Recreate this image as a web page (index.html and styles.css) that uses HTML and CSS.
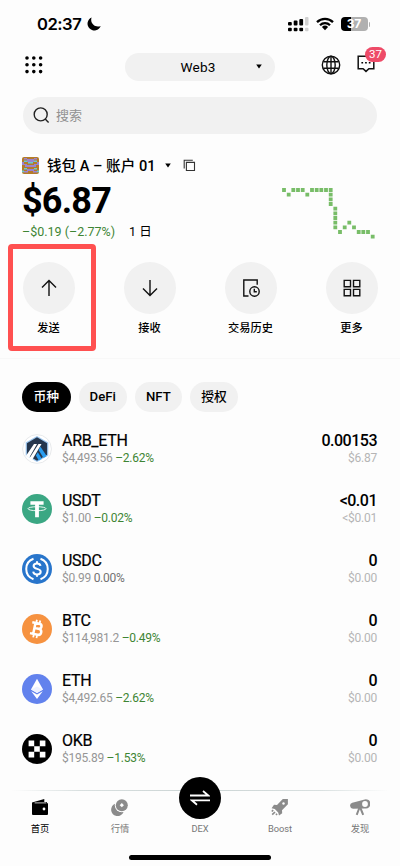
FILE: index.html
```html
<!DOCTYPE html>
<html lang="zh-CN">
<head>
<meta charset="utf-8">
<meta name="viewport" content="width=device-width, initial-scale=1">
<title>Web3</title>
<link rel="stylesheet" href="styles.css">
</head>
<body>
<div class="phone">
  <div class="status">
    <span class="clock">02:37</span>
    <svg class="moon" width="14" height="14" viewBox="0 0 14 14"><path d="M4.6.4A6.8 6.8 0 1 0 13.7 9C8.6 11.3 2.5 6.5 4.6.4Z"/></svg>
    <svg class="signal" width="21" height="15" viewBox="0 0 21 15"><g><rect x="0" y="5" width="3.8" height="3.6" rx="1"/><rect x="5.7" y="3.6" width="3.8" height="5" rx="1"/><rect x="11.3" y="2" width="3.8" height="6.6" rx="1"/><rect x="0" y="10.8" width="3.8" height="3.5" rx="1"/><rect x="5.7" y="10.8" width="3.8" height="3.5" rx="1"/><rect x="11.3" y="10.8" width="3.8" height="3.5" rx="1"/></g><g fill="#d0d0d0"><rect x="17" y="0" width="3.5" height="8.6" rx="1"/><rect x="17" y="10.8" width="3.5" height="3.5" rx="1"/></g></svg>
    <svg class="wifi" width="18" height="14" viewBox="0 0 18 14"><g fill="none" stroke="#000" stroke-width="2.3"><path d="M1 5.1a11.5 11.5 0 0 1 16 0"/><path d="M4 8.2a7.1 7.1 0 0 1 10 0"/></g><path d="M5.9 10a4.5 4.5 0 0 1 6.2 0L9 13.2Z"/></svg>
    <div class="battery"><span>37</span></div><i class="battery-cap"></i>
  </div>

  <header class="top">
    <svg class="apps" width="18" height="18" viewBox="0 0 18 18"><path d="M2 2h.01M8.8 2h.01M15.6 2h.01M2 8.8h.01M8.8 8.8h.01M15.6 8.8h.01M2 15.6h.01M8.8 15.6h.01M15.6 15.6h.01" stroke="#000" stroke-width="3.6" stroke-linecap="round"/></svg>
    <div class="switcher"><span>Web3</span><svg width="6" height="5" viewBox="0 0 6 5"><path d="M.2.6h5.6L3 4.6Z"/></svg></div>
    <svg class="globe" width="20" height="20" viewBox="0 0 20 20" fill="none" stroke="#111" stroke-width="1.4"><circle cx="10" cy="10" r="8.7"/><ellipse cx="10" cy="10" rx="4.2" ry="8.7"/><path d="M2.3 6.7h15.4M2.3 13.3h15.4M10 1.3v17.4"/></svg>
    <div class="messages">
      <svg width="18" height="18" viewBox="0 0 18 18"><path d="M1.2 1.2h15.6v12.6h-4.9L9 16.4l-2.9-2.6H1.2Z" fill="none" stroke="#111" stroke-width="1.5"/><path d="M4.4 6.9h1.7v1.7H4.4zM8.1 6.9h1.7v1.7H8.1zM11.8 6.9h1.7v1.7h-1.7z"/></svg>
      <span class="badge">37</span>
    </div>
  </header>

  <div class="search">
    <svg width="17" height="17" viewBox="0 0 17 17" fill="none" stroke="#222" stroke-width="1.4"><circle cx="7.7" cy="7.4" r="6.5"/><path d="m12.2 12 3.4 3.4"/></svg>
    <span>搜索</span>
  </div>

  <section class="wallet">
    <div class="account">
      <svg class="avatar" width="17" height="17" viewBox="0 0 17 17"><rect width="17" height="17" rx="2" fill="#b47b29"/><path d="M2 1h3v1h7V1h3v1.6h-3V5H5V2.6H2zM0 5h2v2h3v1h7V7h3V5h2v3h-3v2H3V8H0zM2 14h3v-2h7v2h3v1.6h-4V14H6v1.6H2z" fill="#9b83cf"/><path d="M2 3.4h3V5H2zM12 3.4h3V5h-3zM6 5h5v1.6H6zM2 11h3v1.6H2zM12 11h3v1.6h-3zM0 13.6h2v1.6H0zM15 13.6h2v1.6h-2z" fill="#68cbd0"/></svg>
      <span class="account-name">钱包 A – 账户 01</span>
      <svg class="caret" width="6" height="5" viewBox="0 0 6 5"><path d="M.2.6h5.6L3 4.6Z"/></svg>
      <svg width="13" height="13" viewBox="0 0 13 13" fill="none" stroke="#333" stroke-width="1.1"><path d="M3.4 3.4h8.1v8.1H3.4zM1.2 9.5V1.2h8.6"/></svg>
    </div>
    <div class="summary">
      <div>
        <div class="balance">$6.87</div>
        <div class="change"><span class="down">–$0.19 (–2.77%)</span><span class="period">1 日</span></div>
      </div>
      <svg class="chart" width="94" height="52" viewBox="0 0 94 52"><path stroke="#78bd68" stroke-width="3.8" d="M.1 2h3.8M4.8 6.7h3.8M9.4 2h3.8M14.1 2h3.8M18.8 2h3.8M23.4 6.7h3.8M28.1 2h3.8M32.8 2h3.8M37.4 2h3.8M42.1 2h3.8M46.8 2h3.8M46.8 6.7h3.8M46.8 11.3h3.8M46.8 16h3.8M51.4 20.7h3.8M51.4 25.3h3.8M51.4 30h3.8M51.4 34.7h3.8M51.4 39.3h3.8M56.1 44h3.8M60.8 39.3h3.8M65.4 34.7h3.8M70.1 39.3h3.8M74.8 44h3.8M79.4 44h3.8M84.1 44h3.8M88.8 48.7h3.8"/></svg>
    </div>
  </section>

  <section class="actions">
    <div class="action highlighted"><div class="disc"><svg width="18" height="18" viewBox="0 0 18 18"><path d="M9 17V1.5M2 8.5l7-7 7 7"/></svg></div><span>发送</span></div>
    <div class="action"><div class="disc"><svg width="18" height="18" viewBox="0 0 18 18"><path d="M9 1v15.5M2 9.5l7 7 7-7"/></svg></div><span>接收</span></div>
    <div class="action"><div class="disc"><svg width="18" height="18" viewBox="0 0 18 18"><path d="M6.5 17H1.8V1h13.4v4.8"/><circle cx="12.5" cy="12.5" r="4.7"/><path d="M12.3 9.7v3h2.5"/></svg></div><span>交易历史</span></div>
    <div class="action"><div class="disc"><svg width="18" height="18" viewBox="0 0 18 18"><path d="M1.2 1.4h6.3v6.3H1.2zM10.5 1.4h6.3v6.3h-6.3zM1.2 10.4h6.3v6.3H1.2zM10.5 10.4h6.3v6.3h-6.3z"/></svg></div><span>更多</span></div>
  </section>

  <nav class="tabs"><span class="tab active">币种</span><span class="tab latin">DeFi</span><span class="tab latin">NFT</span><span class="tab">授权</span></nav>

  <main class="tokens">
    <div class="token">
      <svg viewBox="0 0 30 30"><circle cx="15" cy="15" r="14.4" fill="#fff" stroke="#e7e9eb"/><path d="m15 1.9 11.3 6.5v13.2L15 28.1 3.7 21.6V8.4Z" fill="#9fc7ee"/><path d="m15 3.3 10.1 5.9v11.6L15 26.7 4.9 20.8V9.2Z" fill="#25364d"/><path d="m18.3 12.5 6.4 9.5-3.2 1.9-4.9-7.9Z" fill="#299df0"/><path d="m15.8 18.2 4 6.6-3 1.7-2.9-4.9Z" fill="#299df0"/><path d="M12 10h3L7.2 23.7l-3.2-2ZM16.5 10h3l-9.4 16-2.8-1.6Z" fill="#fff"/></svg>
      <div class="info"><b>ARB_ETH</b><small>$4,493.56 <em>–2.62%</em></small></div><div class="holding"><b>0.00153</b><small>$6.87</small></div>
    </div>
    <div class="token">
      <svg viewBox="0 0 30 30"><circle cx="15" cy="15" r="15" fill="#3ba783"/><path d="M8.4 7.2h13.2v3.5h-4.7v12.5h-3.8V10.7H8.4Z" fill="#fff"/><ellipse cx="15" cy="14.7" rx="9" ry="2" fill="none" stroke="#fff" stroke-width=".9"/></svg>
      <div class="info"><b>USDT</b><small>$1.00 <em>–0.02%</em></small></div><div class="holding"><b>&lt;0.01</b><small>&lt;$0.01</small></div>
    </div>
    <div class="token">
      <svg viewBox="0 0 30 30" fill="none" stroke="#fff"><circle cx="15" cy="15" r="15" fill="#2875cb" stroke="none"/><path d="M11.5 4.8a10.8 10.8 0 0 0 0 20.4M18.5 4.8a10.8 10.8 0 0 1 0 20.4" stroke-width="2"/><path d="M18.5 11.9c-.3-1.7-1.6-2.5-3.5-2.5-2.1 0-3.4 1-3.4 2.6 0 3.9 7.1 1.8 7.1 5.7 0 1.8-1.5 2.8-3.7 2.8s-3.6-1-3.8-2.8M15 7.2v2.2M15 20.5v2.3" stroke-width="2"/></svg>
      <div class="info"><b>USDC</b><small>$0.99 <em class="flat">0.00%</em></small></div><div class="holding"><b>0</b><small>$0.00</small></div>
    </div>
    <div class="token">
      <svg viewBox="0 0 30 30"><circle cx="15" cy="15" r="15" fill="#f69240"/><g transform="rotate(12 15 15)" fill="none" stroke="#fff" stroke-width="2.5"><path d="M9 9.3h7.2c3.6 0 3.6 5.2 0 5.2H12h4.8c4 0 4 6 0 6H9M12.3 9.3v11.2"/><path d="M13 6v3.3M16.4 6v3.3M13 20.5V24M16.4 20.5V24" stroke-width="1.8"/></g></svg>
      <div class="info"><b>BTC</b><small>$114,981.2 <em>–0.49%</em></small></div><div class="holding"><b>0</b><small>$0.00</small></div>
    </div>
    <div class="token">
      <svg viewBox="0 0 30 30"><circle cx="15" cy="15" r="15" fill="#6282ed"/><path d="m15 4.8 6 10.6-6 3.5-6-3.5Z" fill="#fff"/><path d="m9.2 17.2 5.8 3.3 5.8-3.3L15 25Z" fill="#fff"/><path d="M15 12.5 9 15.4l6 3.5 6-3.5Z" fill="#eef2ff"/></svg>
      <div class="info"><b>ETH</b><small>$4,492.65 <em>–2.62%</em></small></div><div class="holding"><b>0</b><small>$0.00</small></div>
    </div>
    <div class="token">
      <svg viewBox="0 0 30 30"><circle cx="15" cy="15" r="15"/><path d="M6.6 6.6h5.6v5.6H6.6zM17.8 6.6h5.6v5.6h-5.6zM12.2 12.2h5.6v5.6h-5.6zM6.6 17.8h5.6v5.6H6.6zM17.8 17.8h5.6v5.6h-5.6z" fill="#fff"/></svg>
      <div class="info"><b>OKB</b><small>$195.89 <em>–1.53%</em></small></div><div class="holding"><b>0</b><small>$0.00</small></div>
    </div>
  </main>

  <footer class="bar">
    <div class="item current"><svg width="20" height="18" viewBox="0 0 20 18"><path d="M2 4.5 14.3 1v3H17v1.2h1V16a1 1 0 0 1-1 1H3a1 1 0 0 1-1-1Z"/><path d="M4.6 4.9h11.8" stroke="#fff" stroke-width=".8"/><circle cx="14" cy="11" r="1.4" fill="#fff"/></svg><span>首页</span></div>
    <div class="item"><svg width="20" height="18" viewBox="0 0 20 18"><path d="M6 5.5a6.2 6.2 0 0 0 7.7 8A6.4 6.4 0 1 1 6 5.5Z"/><circle cx="11.8" cy="7.2" r="7" fill="#fdfdfd"/><circle cx="11.8" cy="7.2" r="6"/><path d="m11.8 5.1 2.1 2.1-2.1 2.1-2.1-2.1Z" fill="#fdfdfd"/></svg><span>行情</span></div>
    <div class="item dex"><div class="swap"><svg width="20" height="16" viewBox="0 0 20 16" fill="none" stroke="#fff" stroke-width="1.8"><path d="M0 5.5h18.3L13 1M20 10.3H1.8L7 14.8"/></svg></div><span>DEX</span></div>
    <div class="item"><svg width="20" height="18" viewBox="0 0 20 18"><path d="M17.9 1v5.2L12 12.3l.2 3-3.2 2.2-.8-3.1-3.4-3.5-3.2-.7L4 6.8l3 .2L12.8 1Z"/><circle cx="13.5" cy="5.5" r="1.2" fill="#fdfdfd"/><path d="m3.2 12.2-1.4 1.3M5 14l-2.8 2.7M7 15.7l-1 1.2" stroke="#8b8b8b" stroke-width="1.7"/></svg><span>Boost</span></div>
    <div class="item"><svg width="20" height="18" viewBox="0 0 20 18"><path d="m2.3 4.8 11.5-3A4.6 4.6 0 1 1 15 10.4L3 10.7A3 3 0 0 1 2.3 4.8Z"/><circle cx="15" cy="6" r="2.9" fill="#fdfdfd"/><path d="m9.5 9.5-2.8 7.3M10.2 9.5l3 7.3" stroke="#8b8b8b" stroke-width="2"/></svg><span>发现</span></div>
  </footer>
  <div class="home"></div>
</div>
</body>
</html>
```
FILE: styles.css
```css
*, *::after { box-sizing: border-box; }
body { margin: 0; background: #fdfdfd; color: #000; font-family: Roboto, "Noto Sans CJK SC", sans-serif; }
svg { display: block; flex-shrink: 0; }
.phone { width: 400px; height: 866px; overflow: hidden; display: flex; flex-direction: column; }

.status { height: 48px; padding: 0 30px 0 37px; display: flex; align-items: center; font-family: Inter, sans-serif; }
.clock { font-size: 16.6px; font-weight: 600; line-height: 20px; width: 50px; letter-spacing: -.5px; }
.signal { margin-left: auto; }
.wifi { margin-left: 7px; }
.battery { width: 27px; height: 14px; border-radius: 4px; margin-left: 7px; background: linear-gradient(90deg, #000 37%, #b0b0b0 37%); color: #fff; font-size: 12px; line-height: 14px; font-weight: 700; text-align: center; }
.battery-cap { width: 1.5px; height: 5px; margin-left: 1px; border-radius: 0 2px 2px 0; background: #b0b0b0; }

.top { height: 34px; padding: 0 25px; display: flex; align-items: center; }
.apps { margin-top: -1px; }
.switcher { width: 150px; height: 28px; margin: 3px 0 0 82px; border-radius: 14px; background: #f1f1f1; display: flex; align-items: center; padding-right: 13px; }
.switcher span { width: 150px; text-align: center; font-size: 13.6px; padding-left: 15px; letter-spacing: .2px; }
.globe { margin-left: 46px; margin-top: -1px; }
.messages { margin-left: auto; position: relative; margin-top: -2px; }
.badge { position: absolute; left: 8px; top: -8px; width: 21px; height: 15px; border-radius: 8px; background: #ee4b68; color: #fff; font-size: 11.5px; line-height: 15px; text-align: center; }

.search { height: 37px; margin: 15px 23px 0; padding-left: 10px; border-radius: 19px; background: #f1f1f1; display: flex; align-items: center; gap: 6px; color: #929292; font-size: 13px; }
.search span { margin-top: -2px; }

.wallet { height: 128px; padding: 20px 24px 0 22px; }
.account { height: 23px; display: flex; align-items: center; }
.account-name { margin: -3px 0 0 8px; width: 109px; font-size: 14.6px; font-weight: 500; white-space: nowrap; }
.caret { margin: 0 12px 0 9px; }
.summary { display: flex; justify-content: space-between; }
.balance { height: 46px; font-size: 36px; line-height: 48px; font-weight: 700; letter-spacing: -.8px; }
.change { display: flex; align-items: center; gap: 13px; height: 18px; font-size: 12.5px; line-height: 18px; white-space: nowrap; }
.down { width: 94px; color: #3e8534; }
.chart { margin: 11px 0 0; }

.actions { height: 97px; padding: 0 22px; display: flex; justify-content: space-between; border-bottom: 1px solid #f8f8f8; }
.action { width: 53px; display: flex; flex-direction: column; align-items: center; position: relative; font-size: 11.2px; line-height: 16px; font-weight: 500; white-space: nowrap; }
.action span { margin-top: 7px; }
.disc { width: 52px; height: 52px; border-radius: 50%; background: #f1f1f1; display: grid; place-items: center; }
.disc svg { fill: none; stroke: #111; stroke-width: 1.4; }
.highlighted::after { content: ""; position: absolute; left: -14.5px; top: -18.5px; width: 88px; height: 107px; border: 5.5px solid #ff5050; border-radius: 4px; }

.tabs { display: flex; gap: 8px; padding: 23px 22px 0; }
.tab { height: 30px; padding: 0 11.5px; border-radius: 15px; background: #f1f1f1; font-size: 12.8px; line-height: 29px; font-weight: 500; }
.active { background: #000; color: #fff; }
.latin { padding: 0 11px; font-size: 13.2px; line-height: 30px; }

.tokens { padding: 7px 23px 0 22px; }
.token { height: 60px; display: flex; align-items: center; }
.token > svg { width: 30px; height: 30px; }
.info, .holding { display: flex; flex-direction: column; white-space: nowrap; margin-top: -2px; }
.info { margin-left: 10px; }
.holding { margin-left: auto; text-align: right; }
.token b { font-size: 16px; line-height: 19px; font-weight: 500; letter-spacing: -.5px; }
.info b { font-weight: 400; -webkit-text-stroke: .2px; letter-spacing: -.3px; }
.token small { font-size: 12px; line-height: 16px; color: #969696; letter-spacing: -.25px; }
.token em { font-style: normal; color: #3e8534; }
.token .flat { color: #727272; }
.holding small { color: #b5b5b5; }

.bar { height: 62px; margin-top: 11px; display: flex; border-top: 1px solid; border-image: linear-gradient(90deg, transparent 3%, #d9e0e0 20%, #cbd4d4 50%, #d9e0e0 80%, transparent 97%) 1; }
.item { width: 80px; padding-top: 7px; display: flex; flex-direction: column; align-items: center; color: #777; fill: #8b8b8b; font-size: 9.3px; line-height: 14px; }
.item span { margin-top: 6px; }
.current { color: #000; fill: #000; }
.dex { padding: 0; }
.swap { width: 42px; height: 42px; margin-top: -14px; border-radius: 50%; background: #000; display: grid; place-items: center; }
.dex span { margin-top: 3px; }
.home { width: 142px; height: 5px; margin: 3px auto 0; border-radius: 3px; background: #000; }
```
